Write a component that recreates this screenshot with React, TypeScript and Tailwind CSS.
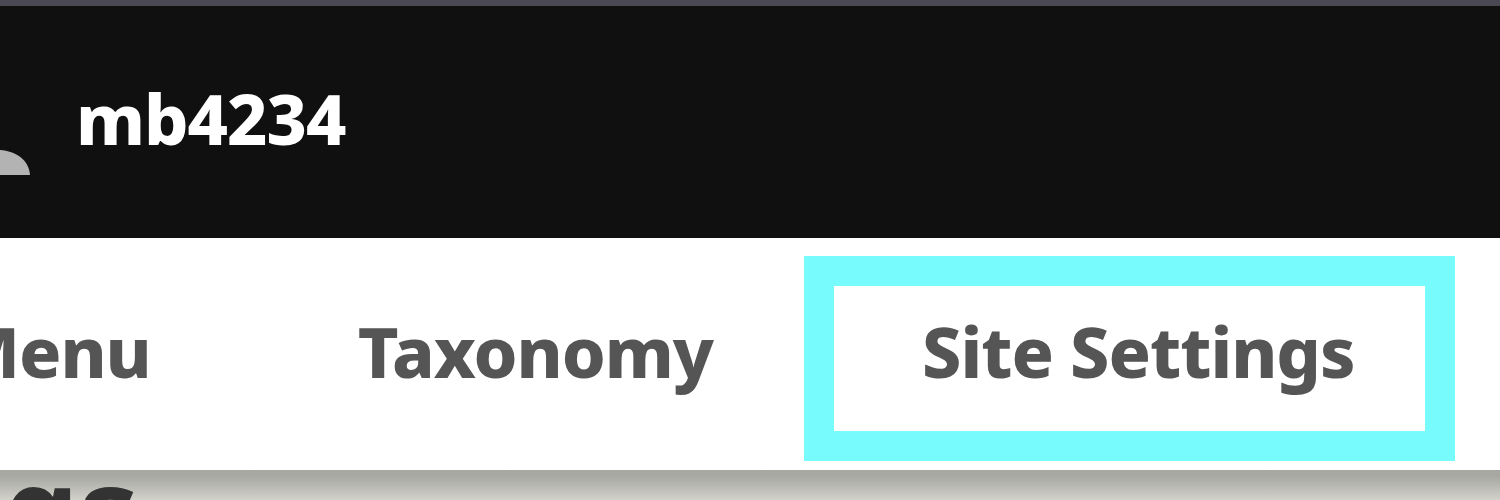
const font = { fontFamily: '"Noto Sans", sans-serif' };

export default function App() {
  return (
    <div className="h-[500px] w-[1500px] overflow-hidden bg-[#d8d8d0]" style={font}>
      <div className="h-[6px] bg-[#4a4953]" />

      {/* User bar */}
      <header className="flex h-[232px] items-start bg-[#101011] blur-[0.6px]">
        <svg width="30" height="175" viewBox="0 0 30 175" className="shrink-0">
          <path d="M0 144 C16 145 29 154 30 169 L0 169 Z" fill="#b3b3b3" />
        </svg>
        <span className="ml-[46px] mt-[64px] text-[70px] leading-[96px] font-extrabold tracking-[-1px] text-white">mb4234</span>
      </header>

      {/* Nav */}
      <nav className="relative z-10 flex h-[232px] items-center justify-end bg-white pb-[6px] pr-[45px] font-extrabold tracking-[-1px] text-[#555555] blur-[0.4px]">
        <span className="mr-[207px] shrink-0 text-[70px] leading-none">Menu</span>
        <span className="mr-[91px] shrink-0 text-[70px] leading-none">Taxonomy</span>
        <div className="mt-[15px] flex h-[205px] w-[651px] shrink-0 items-center border-[30px] border-[#78fbfd] pb-[15px] pl-[88px]">
          <span className="text-[70px] leading-none whitespace-nowrap">Site Settings</span>
        </div>
      </nav>

      {/* Page behind the nav */}
      <div className="h-[30px] overflow-hidden bg-gradient-to-b from-[#a8a8a3] from-20% to-[#d2d2ca] pl-[3px]">
        <h1 className="mt-[-22px] text-[120px] leading-none font-bold text-[#333333]">gs</h1>
      </div>
    </div>
  );
}
